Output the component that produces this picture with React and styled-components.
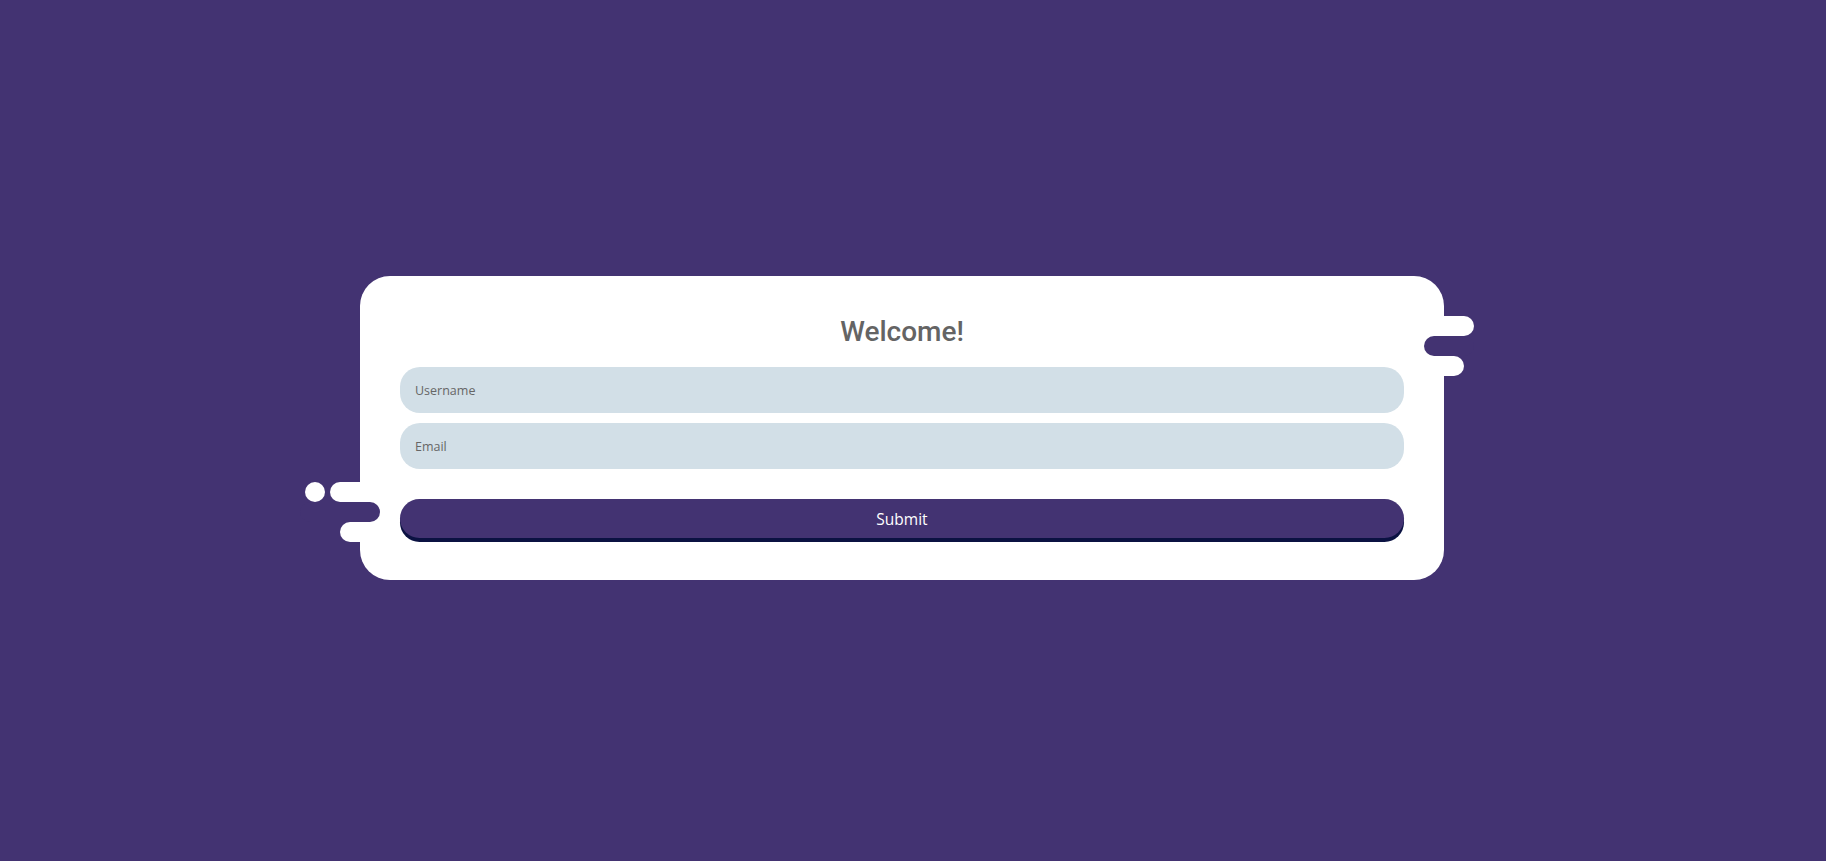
import React from "react";
import styled, { createGlobalStyle } from "styled-components";

const BG = "#433372";

const Global = createGlobalStyle`
  * { box-sizing: border-box; }
  html, body { margin: 0; padding: 0; background: ${BG}; }
  body { font-family: "Open Sans", "Noto Sans", sans-serif; }
`;

const Page = styled.main`
  min-height: 100vh;
  display: flex;
  align-items: center;
  justify-content: center;
  padding: 0 22px 5px 0;
`;

const Card = styled.form`
  position: relative;
  width: 1084px;
  background: #ffffff;
  border-radius: 30px;
  padding: 39px 40px 42px;
  display: flex;
  flex-direction: column;
`;

const Title = styled.h1`
  margin: 0 0 18px;
  font-family: Roboto, "Liberation Sans", sans-serif;
  font-weight: 500;
  font-size: 28px;
  line-height: 34px;
  color: #646464;
  text-align: center;
`;

const Fields = styled.div`
  display: flex;
  flex-direction: column;
  gap: 10px;
`;

const Input = styled.input`
  display: block;
  width: 100%;
  height: 46px;
  border: none;
  outline: none;
  border-radius: 20px;
  background: #d2dfe7;
  padding: 0 15px;
  font-family: "Open Sans", "Noto Sans", sans-serif;
  font-size: 12.5px;
  color: #555;
  &::placeholder { color: #666; opacity: 1; }
`;

const Submit = styled.button`
  margin-top: 30px;
  height: 39px;
  width: 100%;
  border: none;
  border-radius: 20px;
  background: ${BG};
  box-shadow: 0 4px 0 #0b1242;
  color: #ffffff;
  font-family: "Open Sans", "Noto Sans", sans-serif;
  font-size: 15.5px;
  cursor: pointer;
`;

/* decorative "drips" that stick out of the card edges */
const Deco = styled.div`
  position: absolute;
  display: flex;
  flex-direction: column;
  align-items: ${(p) => (p.$side === "left" ? "flex-end" : "flex-start")};
  ${(p) => (p.$side === "left" ? "left: -60px; top: 206px;" : "right: -30px; top: 40px;")}
  width: ${(p) => (p.$side === "left" ? 80 : 50)}px;
  pointer-events: none;
`;

const DecoRow = styled.div`
  display: flex;
  gap: 5px;
`;

const Pill = styled.span`
  display: block;
  height: 20px;
  border-radius: 10px;
  width: ${(p) => p.$w}px;
  background: ${(p) => (p.$cut ? BG : "#ffffff")};
`;

export default function App() {
  return (
    <>
      <Global />
      <Page>
        <Card onSubmit={(e) => e.preventDefault()}>
          <Deco $side="left">
            <DecoRow>
              <Pill $w={20} />
              <Pill $w={50} />
            </DecoRow>
            <Pill $cut $w={80} />
            <Pill $w={40} />
          </Deco>
          <Deco $side="right">
            <Pill $w={50} />
            <Pill $cut $w={50} />
            <Pill $w={40} />
          </Deco>

          <Title>Welcome!</Title>
          <Fields>
            <Input type="text" placeholder="Username" />
            <Input type="email" placeholder="Email" />
          </Fields>
          <Submit type="submit">Submit</Submit>
        </Card>
      </Page>
    </>
  );
}
